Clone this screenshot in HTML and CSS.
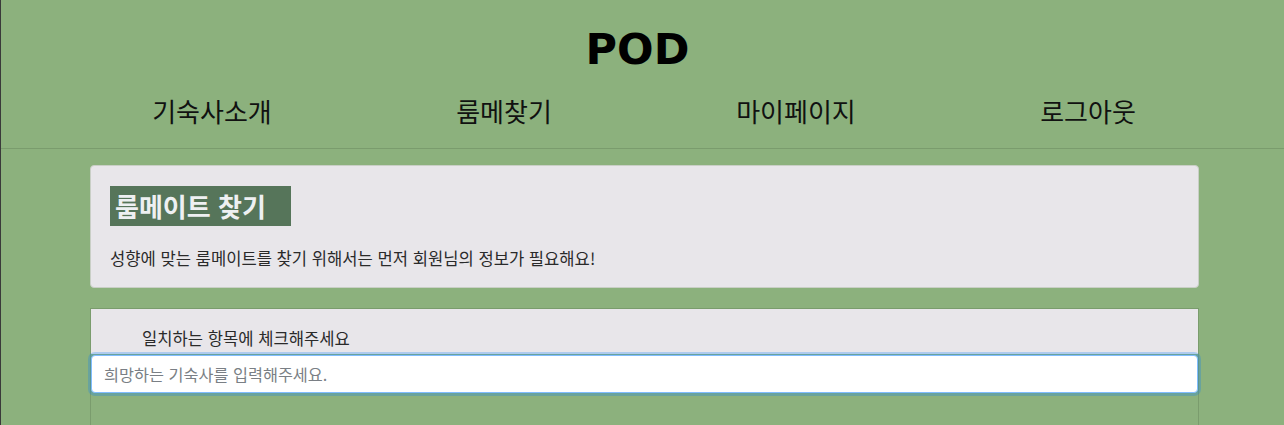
FILE: index.html
```html
<!DOCTYPE html>
<html lang="ko">
<head>
<meta charset="utf-8">
<title>POD</title>
<link rel="stylesheet" href="styles.css">
</head>
<body>
<header class="site-header">
  <h1 class="logo">POD</h1>
  <nav class="nav">
    <a class="nav-item" href="#">기숙사소개</a>
    <a class="nav-item" href="#">룸메찾기</a>
    <a class="nav-item" href="#">마이페이지</a>
    <a class="nav-item" href="#">로그아웃</a>
  </nav>
</header>
<main class="container">
  <section class="jumbo">
    <h2 class="jumbo-title">룸메이트 찾기</h2>
    <p class="jumbo-text">성향에 맞는 룸메이트를 찾기 위해서는 먼저 회원님의 정보가 필요해요!</p>
  </section>
  <section class="panel">
    <div class="panel-head">일치하는 항목에 체크해주세요</div>
    <input class="field" type="text" placeholder="희망하는 기숙사를 입력해주세요." autofocus>
  </section>
</main>
</body>
</html>
```

FILE: styles.css
```css
html, body {
  margin: 0;
  padding: 0;
}
body {
  background: #8cb17d;
  font-family: "Noto Sans CJK KR", "Noto Sans", sans-serif;
  color: #222;
  border-left: 1px solid #3a3a3a;
  min-height: 425px;
  box-sizing: border-box;
}
.site-header {
  border-bottom: 1px solid #7a9c6d;
}
.logo {
  margin: 0;
  padding-top: 24px;
  text-align: center;
  font-family: "DejaVu Sans", sans-serif;
  font-weight: bold;
  font-size: 43px;
  line-height: 50px;
  color: #000;
  padding-right: 10px;
}
.nav {
  display: flex;
  padding: 16px 50px 0 65px;
  height: 74px;
  box-sizing: border-box;
}
.nav-item {
  flex: 1;
  text-align: center;
  font-size: 26px;
  line-height: 42px;
  color: #111;
  text-decoration: none;
}
.container {
  width: 1109px;
  margin: 16px 0 0 89px;
}
.jumbo {
  background: #e8e6ea;
  border: 1px solid #c9cfc6;
  border-radius: 4px;
  padding: 20px 20px 17px 19px;
  height: 84px;
}
.jumbo-title {
  display: inline-block;
  margin: 0;
  background: #56755a;
  color: #eef0f2;
  font-size: 26px;
  font-weight: bold;
  line-height: 40px;
  width: 176px;
  padding-left: 5px;
}
.jumbo-text {
  margin: 20px 0 0;
  font-size: 16.6px;
  line-height: 24px;
  color: #2a2a2a;
}
.panel {
  margin-top: 20px;
  border: 1px solid #7a9c6d;
  border-bottom: none;
  height: 120px;
}
.panel-head {
  background: #e8e6ea;
  padding: 16px 0 0 51px;
  height: 29px;
  font-size: 16.6px;
  line-height: 26px;
  color: #2a2a2a;
}
.field {
  display: block;
  box-sizing: border-box;
  width: 100%;
  height: 38px;
  margin: 1px 0 0;
  padding: 0 12px;
  font-family: "Noto Sans CJK KR", "Noto Sans", sans-serif;
  font-size: 16.3px;
  color: #495057;
  background: #fff;
  border: 1px solid #80bdff;
  border-radius: 4px;
  outline: none;
  box-shadow: 0 0 0 3px rgba(0, 123, 255, 0.25);
}
.field::placeholder {
  color: #7a7f85;
}
```
